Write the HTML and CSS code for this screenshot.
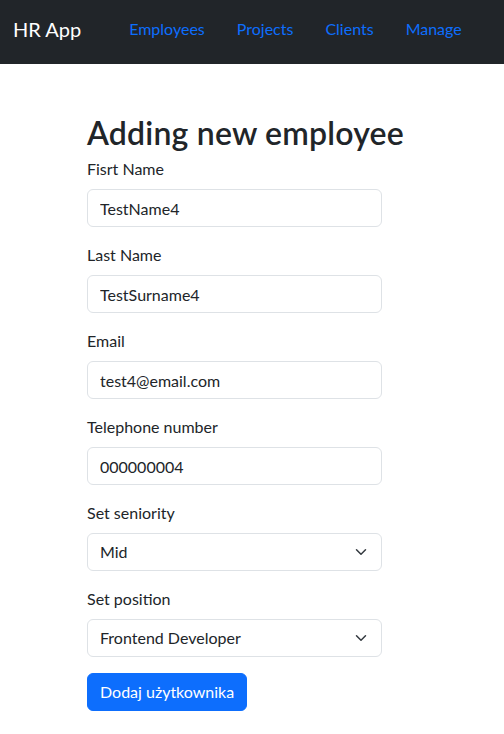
FILE: index.html
```html
<!DOCTYPE html>
<html>
<head>
<meta charset="utf-8">
<link rel="stylesheet" href="styles.css">
</head>
<body>
<nav class="navbar">
  <a class="brand" href="#">HR App</a>
  <ul class="nav">
    <li><a href="#">Employees</a></li>
    <li><a href="#">Projects</a></li>
    <li><a href="#">Clients</a></li>
    <li><a href="#">Manage</a></li>
  </ul>
</nav>
<main class="page">
  <form class="form">
    <h2 class="title">Adding new employee</h2>
    <div class="field">
      <label>Fisrt Name</label>
      <input class="control" type="text" value="TestName4">
    </div>
    <div class="field">
      <label>Last Name</label>
      <input class="control" type="text" value="TestSurname4">
    </div>
    <div class="field">
      <label>Email</label>
      <input class="control" type="text" value="test4@email.com">
    </div>
    <div class="field">
      <label>Telephone number</label>
      <input class="control" type="text" value="000000004">
    </div>
    <div class="field">
      <label>Set seniority</label>
      <div class="select">
        <span>Mid</span>
        <svg width="16" height="12" viewBox="0 0 16 16"><path d="m2 5 6 6 6-6" fill="none" stroke="#343a40" stroke-width="2" stroke-linecap="round" stroke-linejoin="round"/></svg>
      </div>
    </div>
    <div class="field">
      <label>Set position</label>
      <div class="select">
        <span>Frontend Developer</span>
        <svg width="16" height="12" viewBox="0 0 16 16"><path d="m2 5 6 6 6-6" fill="none" stroke="#343a40" stroke-width="2" stroke-linecap="round" stroke-linejoin="round"/></svg>
      </div>
    </div>
    <button class="btn" type="button">Dodaj użytkownika</button>
  </form>
</main>
</body>
</html>
```

FILE: styles.css
```css
* { box-sizing: border-box; }
html, body { margin: 0; padding: 0; }
body {
  font-family: "Lato", "Noto Sans", sans-serif;
  font-size: 16px;
  line-height: 1.5;
  color: #212529;
  background: #fff;
}
.navbar {
  height: 64px;
  background: #212529;
  display: flex;
  align-items: center;
  padding: 0 13px 7px 13px;
}
.brand {
  color: #fff;
  font-size: 20px;
  text-decoration: none;
  margin-right: 32px;
}
.nav {
  list-style: none;
  margin: 0;
  padding: 0;
  display: flex;
}
.nav a {
  display: block;
  color: #0d6efd;
  text-decoration: none;
  padding: 8px 16px;
}
.page {
  padding: 50px 0 0 87px;
}
.form {
  width: 295px;
}
.title {
  font-size: 32px;
  font-weight: 600;
  line-height: 1.2;
  margin: 0 0 5px 0;
  white-space: nowrap;
  letter-spacing: 0.2px;
}
.field {
  margin-bottom: 16px;
}
label {
  display: block;
  margin-bottom: 8px;
}
.control, .select {
  display: flex;
  align-items: center;
  width: 100%;
  height: 38px;
  padding: 6px 12px;
  font: inherit;
  color: #212529;
  border: 1px solid #dee2e6;
  border-radius: 6px;
  background: #fff;
}
.select {
  justify-content: space-between;
}
.btn {
  font: inherit;
  color: #fff;
  background: #0d6efd;
  border: 1px solid #0d6efd;
  border-radius: 6px;
  padding: 6px 12px;
  height: 38px;
}
```
